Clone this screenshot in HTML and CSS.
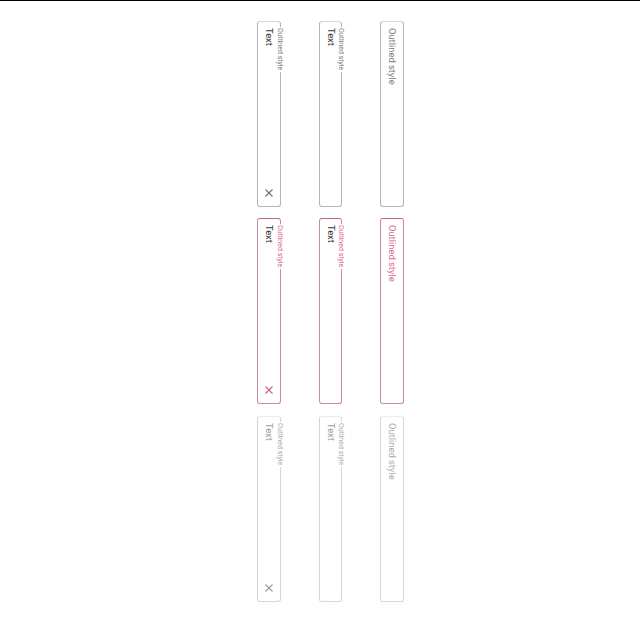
FILE: index.html
```html
<!DOCTYPE html>
<html lang="en">
<head>
<meta charset="utf-8">
<title>Outlined text fields</title>
<link rel="stylesheet" href="styles.css">
</head>
<body>
<main class="fields">
  <div class="field normal"><span class="label">Outlined style</span><span class="value">Text</span><svg class="clear" viewBox="0 0 8 8"><path d="M.5.5l7 7M7.5.5l-7 7"/></svg></div>
  <div class="field normal"><span class="label">Outlined style</span><span class="value">Text</span></div>
  <div class="field normal"><span class="placeholder">Outlined style</span></div>

  <div class="field error"><span class="label">Outlined style</span><span class="value">Text</span><svg class="clear" viewBox="0 0 8 8"><path d="M.5.5l7 7M7.5.5l-7 7"/></svg></div>
  <div class="field error"><span class="label">Outlined style</span><span class="value">Text</span></div>
  <div class="field error"><span class="placeholder">Outlined style</span></div>

  <div class="field disabled"><span class="label">Outlined style</span><span class="value">Text</span><svg class="clear" viewBox="0 0 8 8"><path d="M.5.5l7 7M7.5.5l-7 7"/></svg></div>
  <div class="field disabled"><span class="label">Outlined style</span><span class="value">Text</span></div>
  <div class="field disabled"><span class="placeholder">Outlined style</span></div>
</main>
</body>
</html>
```
FILE: styles.css
```css
* { box-sizing: border-box; }
body {
  margin: 0;
  height: 640px;
  border-top: 1px solid #000;
  background: #fff;
  font-family: Roboto, "Liberation Sans", sans-serif;
}
.fields {
  display: grid;
  grid-template-columns: 24px 23px 24px;
  grid-template-rows: 186px 187px 186px;
  column-gap: 38px;
  row-gap: 11px;
  padding: 20px 0 0 257px;
}
.field {
  position: relative;
  display: flex;
  align-items: center;
  writing-mode: vertical-rl;
  height: 186px;
  padding: 6px 0 9px;
  border: 1px solid var(--line);
  border-top-color: var(--top);
  border-radius: 3px;
  white-space: nowrap;
}
.value, .placeholder {
  font-size: 9.4px;
  line-height: 12px;
}
.value { color: var(--value); }
.placeholder { color: var(--text); }
.label {
  position: absolute;
  top: 5px;
  right: -4px;
  height: 45px;
  padding-top: 1px;
  font-size: 7px;
  line-height: 8px;
  color: var(--text);
  background: #fff;
}
.clear {
  width: 8px;
  height: 8px;
  margin-top: auto;
  fill: none;
  stroke: var(--icon);
  stroke-width: 1.1;
}
.normal { --line: #b4b4b4; --top: #d6d6d6; --text: #7c7c7c; --value: #333; --icon: #707070; }
.error { --line: #cc8c9c; --top: #b86a7c; --text: #dc6c86; --value: #333; --icon: #dc5c7a; }
.disabled { --line: #d6d6d6; --top: #ececec; --text: #acacac; --value: #9c9c9c; --icon: #9c9c9c; }
```
